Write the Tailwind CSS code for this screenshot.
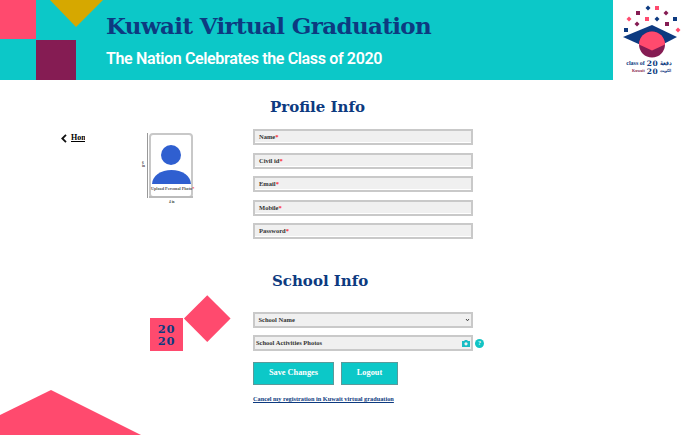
<!DOCTYPE html>
<html lang="en">

<head>
    <meta charset="UTF-8" />
    <meta name="viewport" content="width=device-width, initial-scale=1.0" />
    <script src="https://cdn.jsdelivr.net/npm/@tailwindcss/browser@4"></script>
    <title>Kuwait Virtual Graduation</title>
</head>

<body class="relative h-[435px] w-[700px] overflow-hidden bg-white font-['Liberation_Serif',serif]">
    <!-- Header -->
    <header class="flex h-20 w-[692px]">
        <div class="relative flex-1 bg-[#0cc8c8] pl-[106px]">
            <div class="absolute left-0 top-0 h-[39px] w-9 bg-[#ff4a6e]"></div>
            <div class="absolute left-9 top-10 h-10 w-10 bg-[#851c53]"></div>
            <svg class="absolute left-[50px] top-0" width="53" height="28" viewBox="0 0 53 28">
                <polygon points="0,0 53,0 26,27" fill="#d6a800" />
            </svg>
            <h1 class="mt-[9px] h-[33px] font-['DejaVu_Serif',serif] text-[23px] font-bold leading-[33px] tracking-[-0.65px] whitespace-nowrap text-[#0d3a80]">Kuwait Virtual Graduation</h1>
            <p class="mt-[5px] font-['Roboto',sans-serif] text-base font-semibold leading-[24px] tracking-[-0.35px] text-white whitespace-nowrap">The Nation Celebrates the Class of 2020</p>
        </div>
        <!-- Logo -->
        <div class="flex w-[79px] flex-col items-center bg-white">
            <svg class="shrink-0" width="79" height="60" viewBox="613 0 79 60">
                <polygon points="648,5.5 650.5,8 648,10.5 645.5,8" fill="#0d3a80" />
                <rect x="655" y="6" width="4" height="4" fill="#ff4a6e" />
                <rect x="636" y="11" width="4" height="4" fill="#851c53" />
                <polygon points="666,10.5 668.5,13 666,15.5 663.5,13" fill="#851c53" />
                <polygon points="629,16.5 631.5,19 629,21.5 626.5,19" fill="#ff4a6e" />
                <rect x="645" y="17" width="4" height="4" fill="#ff4a6e" />
                <polygon points="657,16.5 659.5,19 657,21.5 654.5,19" fill="#0d3a80" />
                <rect x="673" y="17" width="4" height="4" fill="#0d3a80" />
                <polygon points="637,21.5 639.5,24 637,26.5 634.5,24" fill="#851c53" />
                <rect x="665" y="22" width="4" height="4" fill="#851c53" />
                <rect x="624" y="28" width="4" height="4" fill="#0d3a80" />
                <polygon points="678,27.5 680.5,30 678,32.5 675.5,30" fill="#ff4a6e" />
                <polygon points="652,25 677,37 652,50 623,37" fill="#0d3a80" />
                <circle cx="652" cy="44.5" r="13" fill="#851c53" />
                <path d="M639 44.5 A13 13 0 0 1 665 44.5 L652 50.5 Z" fill="#ff4a6e" />
            </svg>
            <div class="grid grid-cols-[24px_auto_24px] gap-[2px] text-[#0d3a80]">
                <span class="flex flex-col items-end text-[6px] font-bold leading-[7px]"><span>class of</span><span class="text-[4px] text-[#851c53]">Kuwait</span></span>
                <span class="flex flex-col font-['DejaVu_Serif',serif] text-[7.5px] font-bold leading-[7.5px] tracking-[0.5px]"><span>20</span><span>20</span></span>
                <span class="flex flex-col font-['Noto_Sans',sans-serif] text-[6px] font-bold leading-[7px]"><span>دفعة</span><span class="text-[4px]">الكويت</span></span>
            </div>
        </div>
    </header>

    <main class="flex">
        <!-- Left column -->
        <aside class="w-[253px] shrink-0">
            <div class="flex">
                <a href="#" class="ml-[61px] mt-[52px] flex h-3 w-6 items-center gap-[4px] overflow-hidden text-[8px] font-bold text-black">
                    <svg class="shrink-0" width="6" height="9" viewBox="0 0 6 9" fill="none" stroke="#111" stroke-width="1.8"><path d="M5 0.8 L1.3 4.5 L5 8.2" /></svg>
                    <span class="underline">Home</span>
                </a>
                <!-- Photo -->
                <div class="relative ml-[64px] mt-[53px] h-[65px] w-[44px] rounded-sm border-2 border-[#c8c8c8] bg-white">
                    <div class="mx-auto mt-[10px] h-5 w-5 rounded-full bg-[#2f5fd0]"></div>
                    <div class="mx-auto mt-[5px] h-[14px] w-[39px] rounded-t-[50%_100%] bg-[#2f5fd0]"></div>
                    <p class="mt-[2px] text-center text-[4.2px] font-bold leading-[5px] whitespace-nowrap text-[#555]">Upload Personal Photo<span class="text-red-500">*</span></p>
                    <span class="absolute -bottom-[8px] left-[18px] text-[3.5px] font-bold leading-[4px] text-[#444]">4 in</span>
                    <span class="absolute -left-[9px] top-[27px] w-[4px] text-[3.5px] font-bold leading-[3px] text-[#444]">6 in</span>
                    <div class="absolute -left-[4px] -top-[2px] h-[65px] w-px bg-[#999]"></div>
                    <div class="absolute -bottom-[2px] -left-[2px] h-[2px] w-[44px] bg-[#bbb]"></div>
                </div>
            </div>
            <!-- 2020 badge -->
            <div class="relative ml-[150px] mt-[120px] flex h-[33px] w-[33px] flex-col items-center justify-center bg-[#ff4a6e] font-['DejaVu_Serif',serif] text-[11.5px] font-bold leading-[12px] tracking-[0.8px] text-[#0d3a80]">
                <span>20</span>
                <span>20</span>
                <div class="absolute -top-[16.5px] left-[40.5px] h-[32.5px] w-[32.5px] rotate-45 bg-[#ff4a6e]"></div>
            </div>
        </aside>

        <!-- Form column -->
        <section class="w-[220px] shrink-0">
            <h2 class="mt-[18px] pl-[17px] font-['DejaVu_Serif',serif] text-[15px] font-bold leading-[18px] whitespace-nowrap text-[#0d3a80]">Profile Info</h2>
            <form class="mt-[13px] flex flex-col gap-[7.5px]">
                <div class="flex h-4 items-center border-2 border-[#c9c9c9] bg-[#f0f0f0] pl-[4px] text-[6.5px] font-bold text-[#333] shadow-[inset_0_-1px_0_#fff]">Name<span class="text-red-500">*</span></div>
                <div class="flex h-4 items-center border-2 border-[#c9c9c9] bg-[#f0f0f0] pl-[4px] text-[6.5px] font-bold text-[#333] shadow-[inset_0_-1px_0_#fff]">Civil id<span class="text-red-500">*</span></div>
                <div class="flex h-4 items-center border-2 border-[#c9c9c9] bg-[#f0f0f0] pl-[4px] text-[6.5px] font-bold text-[#333] shadow-[inset_0_-1px_0_#fff]">Email<span class="text-red-500">*</span></div>
                <div class="flex h-4 items-center border-2 border-[#c9c9c9] bg-[#f0f0f0] pl-[4px] text-[6.5px] font-bold text-[#333] shadow-[inset_0_-1px_0_#fff]">Mobile<span class="text-red-500">*</span></div>
                <div class="flex h-4 items-center border-2 border-[#c9c9c9] bg-[#f0f0f0] pl-[4px] text-[6.5px] font-bold text-[#333] shadow-[inset_0_-1px_0_#fff]">Password<span class="text-red-500">*</span></div>
            </form>

            <h2 class="mt-[33px] pl-[19px] font-['DejaVu_Serif',serif] text-[15px] font-bold leading-[18px] whitespace-nowrap text-[#0d3a80]">School Info</h2>
            <div class="mt-[22px] flex h-4 items-center justify-between border-2 border-[#c9c9c9] bg-[#f0f0f0] pl-[3.5px] pr-[1px] text-[6.5px] font-bold text-[#333]">
                <span>School Name</span>
                <svg width="5" height="4" viewBox="0 0 5 4" fill="none" stroke="#444"><path d="M1 1 L2.5 2.8 L4 1" /></svg>
            </div>
            <div class="relative mt-[7px] flex h-4 items-center justify-between border-2 border-[#c9c9c9] bg-[#f0f0f0] pl-[1px] pr-[1px] text-[6.5px] font-bold text-[#333]">
                <span>School Activities Photos</span>
                <svg width="8" height="8" viewBox="0 0 8 8"><path d="M0 2 H2 L3 1 H5 L6 2 H8 V8 H0 Z" fill="#18bcc4" /><circle cx="4" cy="4.8" r="1.6" fill="#f0f0f0" /></svg>
                <span class="absolute -right-[13px] top-[1.5px] flex h-[9px] w-[9px] items-center justify-center rounded-full bg-[#12c4c4] text-[6px] text-white">?</span>
            </div>
            <div class="mt-[11px] flex gap-[7px]">
                <button class="h-[23px] w-[81px] border border-[#5a9a9a] bg-[#0cc8c8] text-[8.3px] font-bold text-white">Save Changes</button>
                <button class="h-[23px] w-[57px] border border-[#5a9a9a] bg-[#0cc8c8] text-[8.3px] font-bold text-white">Logout</button>
            </div>
            <a href="#" class="mt-[9px] block text-[6.3px] font-bold whitespace-nowrap text-[#0d3a80] underline">Cancel my registration in Kuwait virtual graduation</a>
        </section>
    </main>

    <!-- Bottom corner shape -->
    <svg class="absolute bottom-0 left-0" width="141" height="45" viewBox="0 0 141 45">
        <polygon points="0,25 51,0 141,45 0,45" fill="#ff4a6e" />
    </svg>
</body>

</html>
